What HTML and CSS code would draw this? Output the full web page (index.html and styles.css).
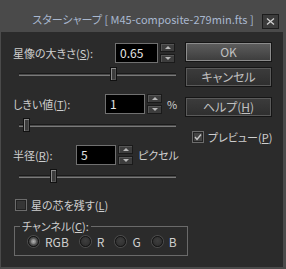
FILE: index.html
```html
<!doctype html>
<html>

<head>
    <meta charset="utf-8">
    <link rel="stylesheet" href="styles.css">
</head>

<body>
    <div class="window">
        <div class="titlebar">
            <span class="title">スターシャープ [ M45-composite-279min.fts ]</span>
            <span class="close">
                <svg width="9" height="7" viewBox="0 0 9 7">
                    <path d="M1 0.5 L8 6.5 M8 0.5 L1 6.5" stroke="#d0d0d0" stroke-width="1.3" fill="none" />
                </svg>
            </span>
        </div>
        <div class="client">
            <div class="settings">
                <div class="field">
                    <span class="label label-size">星像の大きさ(<u>S</u>):</span>
                    <span class="input input-size">0.65</span>
                    <span class="spin"><span class="spin-btn"><i class="up"></i></span><span class="spin-btn"><i class="down"></i></span></span>
                </div>
                <div class="slider"><div class="track"></div><div class="thumb" style="left: 91px"></div></div>

                <div class="field">
                    <span class="label label-threshold">しきい値(<u>T</u>):</span>
                    <span class="input input-threshold">1</span>
                    <span class="spin"><span class="spin-btn"><i class="up"></i></span><span class="spin-btn"><i class="down"></i></span></span>
                    <span class="unit">%</span>
                </div>
                <div class="slider"><div class="track"></div><div class="thumb" style="left: 4px"></div></div>

                <div class="field">
                    <span class="label label-radius">半径(<u>R</u>):</span>
                    <span class="input input-radius">5</span>
                    <span class="spin"><span class="spin-btn"><i class="up"></i></span><span class="spin-btn"><i class="down"></i></span></span>
                    <span class="unit">ピクセル</span>
                </div>
                <div class="slider"><div class="track"></div><div class="thumb" style="left: 31px"></div></div>

                <div class="check check-core">
                    <span class="box"></span>
                    <span>星の芯を残す(<u>L</u>)</span>
                </div>

                <fieldset class="channels">
                    <legend>チャンネル(<u>C</u>):</legend>
                    <div class="radios">
                        <span class="radio-item"><span class="radio checked"></span>RGB</span>
                        <span class="radio-item"><span class="radio"></span>R</span>
                        <span class="radio-item"><span class="radio"></span>G</span>
                        <span class="radio-item"><span class="radio"></span>B</span>
                    </div>
                </fieldset>
            </div>

            <div class="actions">
                <div class="btn btn-default">OK</div>
                <div class="btn btn-cancel">キャンセル</div>
                <div class="btn btn-help">ヘルプ(<u>H</u>)</div>
                <div class="check check-preview">
                    <span class="box checked">
                        <svg width="10" height="10" viewBox="0 0 10 10">
                            <path d="M2 5 L4 7.5 L8 2.5" stroke="#c8c8c8" stroke-width="1.4" fill="none" />
                        </svg>
                    </span>
                    <span>プレビュー(<u>P</u>)</span>
                </div>
            </div>
        </div>
    </div>
</body>

</html>
```

FILE: styles.css
```css
html,
body {
    margin: 0;
    background-color: #4a4a4a;
}

body {
    font-family: "Noto Sans CJK JP", sans-serif;
    font-size: 11px;
    font-feature-settings: "palt";
    color: #cfcfcf;
}

u {
    text-underline-offset: 1px;
}

.window {
    width: 286px;
    height: 269px;
    display: flex;
    flex-direction: column;
    background-color: #4a4a4a;
}

.titlebar {
    height: 32px;
    box-sizing: border-box;
    padding-top: 11px;
    display: grid;
    grid-template-columns: 1fr auto 1fr;
    align-items: start;
}

.title {
    grid-column: 2;
    color: #a9b8cf;
    font-size: 11px;
    line-height: 17px;
    white-space: nowrap;
}

.close {
    grid-column: 3;
    justify-self: end;
    margin: 3px 7px 0 0;
    width: 17px;
    height: 15px;
    box-sizing: border-box;
    border: 1px solid #1c1c1c;
    background-color: #3b3b3b;
    display: flex;
    align-items: center;
    justify-content: center;
}

.client {
    flex: 1;
    margin: 0 3px 2px 1px;
    padding-top: 10px;
    background-color: #2b2b2b;
    display: grid;
    grid-template-columns: 184px 87px;
    align-content: start;
}

.settings {
    padding: 1px 0 0 12px;
}

.field {
    display: flex;
    align-items: center;
    height: 20px;
}

.label {
    white-space: nowrap;
}

.label-size {
    width: 102px;
}

.label-threshold {
    width: 92px;
}

.label-radius {
    width: 63px;
}

.input {
    height: 20px;
    box-sizing: border-box;
    background-color: #000;
    border: 1px solid #707070;
    color: #e4e4e4;
    font-size: 12px;
    padding-left: 4px;
    line-height: 18px;
}

.input-size {
    width: 43px;
}

.input-threshold {
    width: 40px;
}

.input-radius {
    width: 40px;
}

.spin {
    display: flex;
    flex-direction: column;
    gap: 2px;
    margin-left: 2px;
}

.spin-btn {
    width: 15px;
    height: 9px;
    box-sizing: border-box;
    border: 1px solid #1a1a1a;
    background-color: #3d3d3d;
    box-shadow: inset 1px 1px #555;
    display: flex;
    align-items: center;
    justify-content: center;
}

.spin-btn i {
    width: 0;
    height: 0;
    border-left: 3px solid transparent;
    border-right: 3px solid transparent;
}

.spin-btn .up {
    border-bottom: 3px solid #b8b8b8;
}

.spin-btn .down {
    border-top: 3px solid #b8b8b8;
}

.unit {
    margin-left: 5px;
    white-space: nowrap;
}

.slider {
    position: relative;
    width: 157px;
    height: 14px;
    margin: 4px 0 13px 6px;
}

.track {
    position: absolute;
    left: 0;
    right: 0;
    top: 6px;
    height: 3px;
    box-sizing: border-box;
    background-color: #4a4a4a;
    border-top: 1px solid #1a1a1a;
    border-bottom: 1px solid #7a7a7a;
}

.thumb {
    position: absolute;
    top: 0;
    width: 7px;
    height: 14px;
    box-sizing: border-box;
    border: 1px solid #111;
    background-color: #3c3c3c;
    box-shadow: inset 1px 1px #8a8a8a, inset -1px -1px #555;
}

.check {
    display: flex;
    align-items: center;
    gap: 4px;
    height: 17px;
    white-space: nowrap;
}

.check-core {
    margin-left: 2px;
}

.box {
    width: 12px;
    height: 12px;
    box-sizing: border-box;
    border: 1px solid #6c6c6c;
    background-color: #363636;
    box-shadow: inset 0 0 0 1px #222;
    display: flex;
    align-items: center;
    justify-content: center;
}

.box.checked {
    background-color: #444;
}

.channels {
    width: 174px;
    box-sizing: border-box;
    margin: 7px 0 0 1px;
    padding: 3px 0 7px 0;
    border: 1px solid #6a6a6a;
    min-width: 0;
}

.channels legend {
    margin-left: 5px;
    padding: 0 2px;
    line-height: 12px;
}

.radios {
    display: flex;
    align-items: center;
    gap: 11px;
    padding-left: 13px;
    height: 13px;
    font-size: 12px;
    line-height: 13px;
}

.radio-item {
    display: flex;
    align-items: center;
    gap: 6px;
}

.radio {
    width: 11px;
    height: 11px;
    box-sizing: border-box;
    border-radius: 50%;
    border: 1px solid #151515;
    background: radial-gradient(circle at 50% 40%, #3e3e3e, #2c2c2c);
    box-shadow: 0 0 0 1px #4c4c4c;
}

.radio.checked {
    background: radial-gradient(circle, #b0b0b0 0, #8a8a8a 2px, #5a5a5a 3px, #3a3a3a 5px);
}

.actions {
    display: flex;
    flex-direction: column;
}

.btn {
    height: 20px;
    box-sizing: border-box;
    border: 1px solid #151515;
    text-align: center;
    line-height: 18px;
    color: #c0c0c0;
    font-size: 12px;
    white-space: nowrap;
}

.btn-default {
    background: linear-gradient(#5e5e5e, #3c3c3c);
    box-shadow: inset 0 0 0 1px #8c8c8c;
}

.btn-cancel,
.btn-help {
    background: linear-gradient(#3c3c3c, #2e2e2e);
    box-shadow: inset 0 0 0 1px #5a5a5a;
}

.btn-cancel {
    margin-top: 5px;
}

.btn-help {
    margin-top: 10px;
}

.check-preview {
    margin: 11px 0 0 7px;
}
```
